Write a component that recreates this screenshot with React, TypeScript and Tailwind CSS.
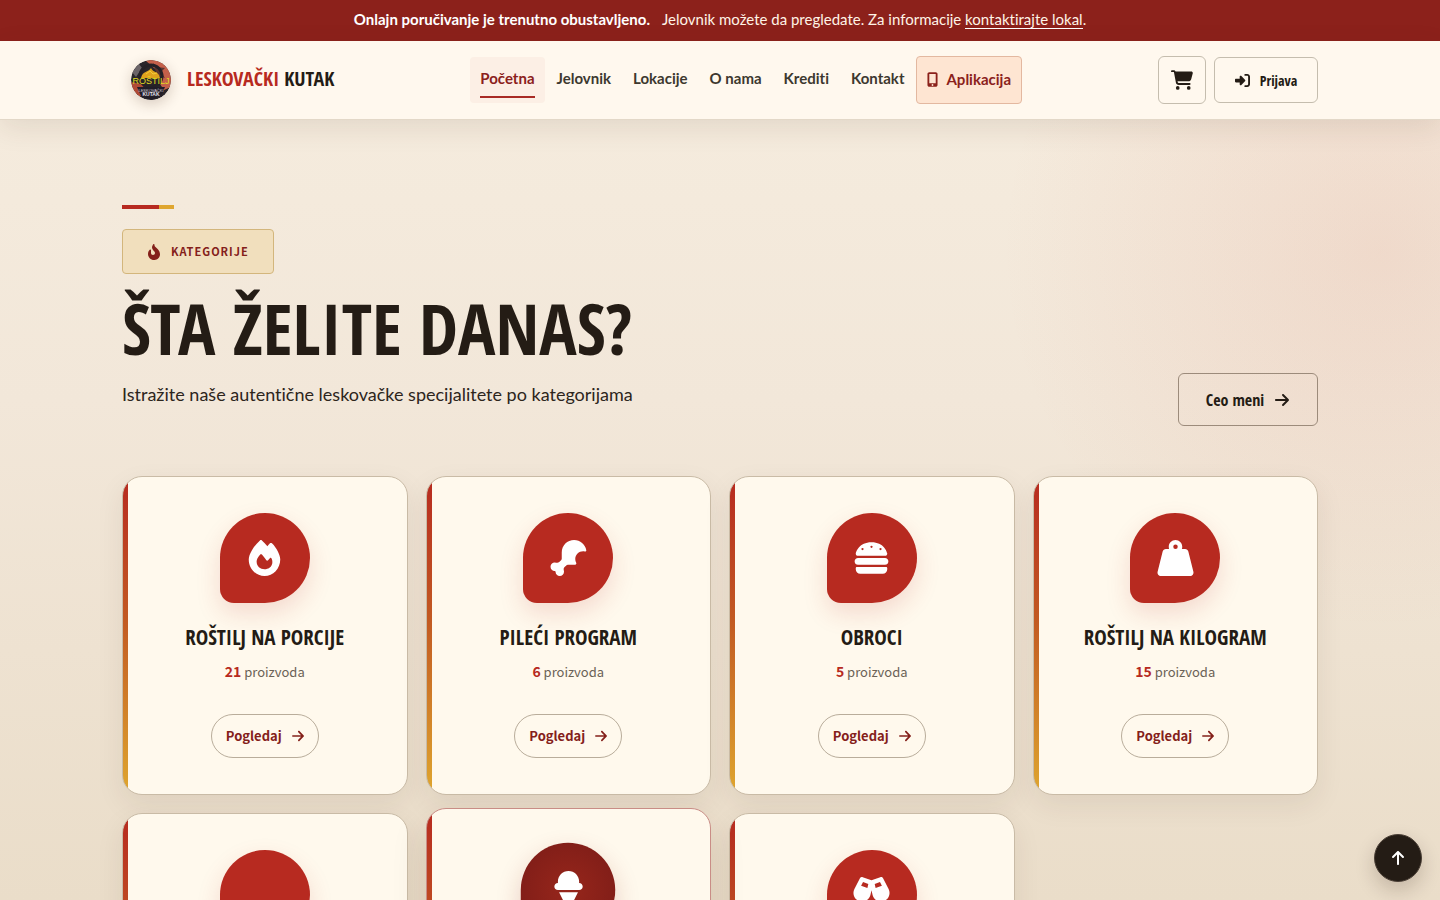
import { IconType } from "react-icons";
import {
  FaArrowRight,
  FaArrowUp,
  FaBurger,
  FaCartShopping,
  FaChampagneGlasses,
  FaDrumstickBite,
  FaFire,
  FaFireFlameCurved,
  FaIceCream,
  FaMobileScreenButton,
  FaRightToBracket,
  FaWeightHanging,
} from "react-icons/fa6";

type Category = {
  id: number;
  name: string;
  count: number;
  icon?: IconType;
  active?: boolean;
};

const navLinks = ["Početna", "Jelovnik", "Lokacije", "O nama", "Krediti", "Kontakt"];

const categories: Category[] = [
  { id: 1, name: "Roštilj na porcije", count: 21, icon: FaFire },
  { id: 2, name: "Pileći program", count: 6, icon: FaDrumstickBite },
  { id: 3, name: "Obroci", count: 5, icon: FaBurger },
  { id: 4, name: "Roštilj na kilogram", count: 15, icon: FaWeightHanging },
  { id: 5, name: "Salate", count: 8 },
  { id: 6, name: "Deserti", count: 4, icon: FaIceCream, active: true },
  { id: 7, name: "Pića", count: 12, icon: FaChampagneGlasses },
];

function Logo() {
  return (
    <svg
      viewBox="0 0 40 40"
      className="size-10 rounded-full shadow-[0_4px_14px_rgba(60,30,10,0.2)]"
      aria-hidden="true"
    >
      <defs>
        <clipPath id="logo-clip">
          <circle cx="20" cy="20" r="20" />
        </clipPath>
      </defs>
      <g clipPath="url(#logo-clip)">
        <rect width="40" height="40" fill="#29252a" />
        <path d="M14 0h26v27l-7 3-4-6 3-10-9-6z" fill="#c4604a" />
        <path d="M0 22l10 2 5 6-6 7-9-7z" fill="#b04a36" />
        <path d="M1 12l7-8 3 4-6 9z" fill="#6b6468" />
        <path d="M22 3l4 4 8 1-4 4 4 6-8-3z" fill="#5a3430" />
        <circle cx="20" cy="16" r="11" fill="none" stroke="#252126" strokeWidth="3" />
        <path d="M10 18c2-8 7-5 10-10 2 5 8 3 9 10z" fill="#e0a31d" />
        <path d="M15 14l4-3 3 3 4-1" fill="none" stroke="#f4cc3a" strokeWidth="1" />
        <path d="M6 27l28 0-4 9-9 4-11-4z" fill="#211d28" />
        <text
          x="20"
          y="24"
          textAnchor="middle"
          fontFamily="Liberation Sans"
          fontSize="9"
          fill="#e0dc1f"
        >
          ROŠTILJ
        </text>
        <text
          x="20"
          y="32"
          textAnchor="middle"
          fontFamily="Liberation Sans"
          fontSize="4"
          fill="#cfc9d6"
        >
          LESKOVAČKI
        </text>
        <text
          x="20"
          y="36"
          textAnchor="middle"
          fontFamily="Liberation Sans"
          fontSize="5"
          fontWeight="bold"
          fill="#e6e2ee"
        >
          KUTAK
        </text>
      </g>
    </svg>
  );
}

function Header() {
  return (
    <header className="relative border-b border-[#e3d8c8] bg-[#fff8ee] shadow-[0_8px_28px_rgba(70,40,20,0.1)]">
      <div className="mx-auto flex h-[78px] max-w-[1240px] items-center justify-between px-[22px]">
        <a
          href="#"
          className="flex items-center gap-4 pl-[9px] font-['Open_Sans_Condensed','Roboto_Condensed',sans-serif] text-[20px] leading-7 text-[#241c15]"
        >
          <Logo />
          <span className="pb-0.5 whitespace-nowrap">
            <strong className="text-[#b72a20]">LESKOVAČKI</strong> KUTAK
          </span>
        </a>

        <nav className="flex items-center gap-0.5 font-['Lato',sans-serif] text-[15px] font-bold text-[#3d382f] [font-variant-ligatures:none]">
          {navLinks.map((link, i) => (
            <a
              key={link}
              href="#"
              className={
                i === 0
                  ? "rounded bg-[#fcefe5] px-2.5 py-[5px] text-[#8b211b]"
                  : "px-2.5 py-[5px]"
              }
            >
              <span
                className={
                  i === 0
                    ? "block border-b-2 border-[#a82a24] pt-1 pb-1.5 leading-6"
                    : "block pt-1 pb-2 leading-6"
                }
              >
                {link}
              </span>
            </a>
          ))}
          <a
            href="#"
            className="flex h-12 items-center gap-2 rounded border border-[#e3b8a0] bg-[#fee5d2] px-2.5 pb-0.5 text-[#8b211b]"
          >
            <FaMobileScreenButton size={15} className="w-[11px]" />
            Aplikacija
          </a>
        </nav>

        <div className="flex items-center gap-2">
          <button
            aria-label="Korpa"
            className="flex size-12 items-center justify-center rounded-md border border-[#c5bdae] text-[#241c15]"
          >
            <FaCartShopping size={22} />
          </button>
          <button className="flex h-[46px] w-[104px] items-center justify-center gap-2.5 rounded-md border border-[#c5bdae] font-['Open_Sans_Condensed','Roboto_Condensed',sans-serif] text-[14px] font-bold text-[#241c15]">
            <FaRightToBracket size={15} />
            Prijava
          </button>
        </div>
      </div>
    </header>
  );
}

function CategoryCard({ category }: { category: Category }) {
  const { name, count, icon: Icon, active } = category;

  return (
    <article
      className={`flex flex-col items-center rounded-[20px] border bg-[#fff9ed] bg-[linear-gradient(#b72a20,#c25a22_45%,#dfa62f)] bg-[length:5px_100%] bg-no-repeat py-9 ${
        active
          ? "-translate-y-[5px] border-[#c98d86] shadow-[0_16px_36px_rgba(70,40,20,0.12)]"
          : "border-[#c9bba6] shadow-[0_10px_28px_rgba(70,40,20,0.08)]"
      }`}
    >
      <div
        className={`flex size-[90px] items-center justify-center rounded-[45px] rounded-bl-[14px] text-white ${
          active
            ? "scale-105 bg-[radial-gradient(#97261b,#7a1b17)] shadow-[0_10px_24px_rgba(140,30,20,0.2)]"
            : "bg-[#b72a20] shadow-[0_10px_24px_rgba(183,42,32,0.15)]"
        }`}
      >
        {Icon && <Icon className="h-9 w-[45px]" />}
      </div>
      <h3 className="mt-5 font-['Open_Sans_Condensed','Roboto_Condensed',sans-serif] text-[21px] leading-7 font-medium text-[#241c15] uppercase">
        {name}
      </h3>
      <p className="mt-2 text-[13px] leading-6 text-[#6b6256]">
        <strong className="text-[14px] text-[#b72a20]">{count}</strong> proizvoda
      </p>
      <a
        href="#"
        className="mt-[30px] flex h-11 items-center gap-2.5 rounded-full border border-[#b9ad9b] px-3.5 text-[13px] font-bold text-[#84201a]"
      >
        Pogledaj
        <FaArrowRight size={14} className="w-3" />
      </a>
    </article>
  );
}

function App() {
  return (
    <div className="min-h-screen bg-[radial-gradient(circle_at_1380px_250px,rgba(205,90,70,0.11),transparent_380px),linear-gradient(#f6eddf,#f2e7d9_400px,#eaddc9_900px)] font-['Noto_Sans_CJK_SC','Noto_Sans',sans-serif]">
      <div className="flex h-[41px] items-center justify-center gap-3 bg-[#8c211b] pb-0.5 font-['Lato',sans-serif] text-[15px] text-[#fff3e6] [font-variant-ligatures:none]">
        <strong className="text-white">Onlajn poručivanje je trenutno obustavljeno.</strong>
        <span>
          Jelovnik možete da pregledate. Za informacije{" "}
          <a href="#" className="border-b border-white">
            kontaktirajte lokal
          </a>
          .
        </span>
      </div>

      <Header />

      <main className="mx-auto max-w-[1240px] px-[22px] pt-[85px] pb-20">
        <div className="flex items-end justify-between">
          <div className="pb-[18px]">
            <div className="flex h-1 w-[52px] bg-[#dfa62f]">
              <div className="w-[37px] bg-[#b72a20]" />
            </div>
            <div className="mt-5 flex h-[45px] w-fit items-center gap-2.5 rounded border border-[#d3b67c] bg-[#f1dfbd] px-6 text-[11px] font-bold tracking-[1px] text-[#84201a]">
              <FaFireFlameCurved size={16} className="w-3.5" />
              KATEGORIJE
            </div>
            <h1 className="mt-2 font-['Open_Sans_Condensed','Roboto_Condensed',sans-serif] text-[70px] leading-[92px] font-medium whitespace-nowrap text-[#241c15]">
              ŠTA ŽELITE DANAS?
            </h1>
            <p className="mt-1.5 font-['Lato',sans-serif] text-[18px] leading-7 text-[#2d251c] [font-variant-ligatures:none]">
              Istražite naše autentične leskovačke specijalitete po kategorijama
            </p>
          </div>
          <a
            href="#"
            className="flex h-[53px] w-[140px] items-center justify-center gap-2.5 rounded-md border border-[#9c8b7b] font-['Open_Sans_Condensed','Roboto_Condensed',sans-serif] text-[16px] font-bold text-[#241c15]"
          >
            Ceo meni
            <FaArrowRight size={16} />
          </a>
        </div>

        <div className="mt-[50px] grid grid-cols-4 gap-[18px]">
          {categories.map((category) => (
            <CategoryCard key={category.id} category={category} />
          ))}
        </div>
      </main>

      <button
        aria-label="Nazad na vrh"
        className="fixed right-[18px] bottom-[18px] flex size-12 items-center justify-center rounded-full border border-[#4a3f36] bg-[#241c15] text-white shadow-[0_8px_20px_rgba(40,20,10,0.2)]"
      >
        <FaArrowUp size={16} />
      </button>
    </div>
  );
}

export default App;
